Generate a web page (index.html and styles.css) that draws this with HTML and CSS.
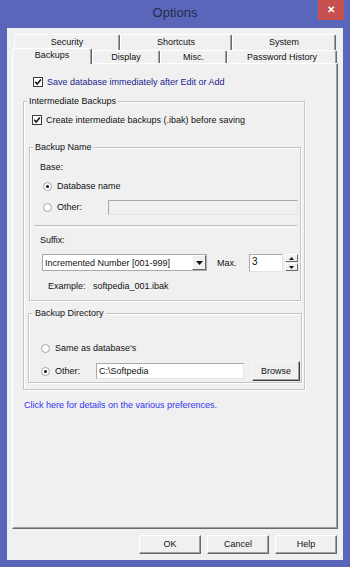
FILE: index.html
```html
<!DOCTYPE html>
<html lang="en">
<head>
    <meta charset="UTF-8">
    <meta name="viewport" content="width=device-width, initial-scale=1.0">
    <link rel="stylesheet" href="styles.css">
</head>
<body>
<div class="window">
    <div class="titlebar">
        <span class="title">Options</span>
        <span class="close">&#x2715;</span>
    </div>

    <div class="client">
        <div class="tab-row back">
            <div class="tab w-security">Security</div>
            <div class="tab w-shortcuts">Shortcuts</div>
            <div class="tab w-system">System</div>
        </div>
        <div class="tab-row front">
            <div class="tab active w-backups">Backups</div>
            <div class="tab w-display">Display</div>
            <div class="tab w-misc">Misc.</div>
            <div class="tab w-history">Password History</div>
        </div>

        <div class="panel">
            <div class="check-row save-row">
                <svg class="checkbox" viewBox="0 0 10 10"><rect x=".5" y=".5" width="9" height="9" fill="#fff" stroke="#3c3c3c"/><path d="M2.2 4.8 L4.2 7 L7.9 2.6" fill="none" stroke="#111" stroke-width="1.5"/></svg>
                <span class="save-label">Save database immediately after Edit or Add</span>
            </div>

            <div class="group group-intermediate">
                <div class="legend">Intermediate Backups</div>
                <div class="check-row ibak-row">
                    <svg class="checkbox" viewBox="0 0 10 10"><rect x=".5" y=".5" width="9" height="9" fill="#fff" stroke="#3c3c3c"/><path d="M2.2 4.8 L4.2 7 L7.9 2.6" fill="none" stroke="#111" stroke-width="1.5"/></svg>
                    <span>Create intermediate backups (.ibak) before saving</span>
                </div>

                <div class="group group-name">
                    <div class="legend">Backup Name</div>
                    <div class="field-label">Base:</div>
                    <div class="radio-row base-db">
                        <svg class="radio" viewBox="0 0 10 10"><circle cx="5" cy="5" r="4.4" fill="#fff" stroke="#9a9a9a"/><circle cx="5" cy="5" r="1.7" fill="#111"/></svg>
                        <span>Database name</span>
                    </div>
                    <div class="radio-row base-other">
                        <svg class="radio" viewBox="0 0 10 10"><circle cx="5" cy="5" r="4.4" fill="#fff" stroke="#9a9a9a"/></svg>
                        <span class="other-label">Other:</span>
                        <div class="textbox disabled base-input"></div>
                    </div>
                    <div class="separator"></div>
                    <div class="field-label suffix-label">Suffix:</div>
                    <div class="suffix-row">
                        <div class="combo">
                            <span class="combo-text">Incremented Number [001-999]</span>
                            <span class="combo-btn"><svg viewBox="0 0 7 4"><path d="M0 0 H7 L3.5 4 Z" fill="#111"/></svg></span>
                        </div>
                        <span class="max-label">Max.</span>
                        <div class="textbox spin-input">3</div>
                        <div class="spin">
                            <span class="spin-btn"><svg viewBox="0 0 5 3"><path d="M0 3 H5 L2.5 0 Z" fill="#111"/></svg></span>
                            <span class="spin-btn"><svg viewBox="0 0 5 3"><path d="M0 0 H5 L2.5 3 Z" fill="#111"/></svg></span>
                        </div>
                    </div>
                    <div class="example-row">
                        <span class="example-label">Example:</span>
                        <span>softpedia_001.ibak</span>
                    </div>
                </div>

                <div class="group group-dir">
                    <div class="legend">Backup Directory</div>
                    <div class="radio-row dir-same">
                        <svg class="radio" viewBox="0 0 10 10"><circle cx="5" cy="5" r="4.4" fill="#fff" stroke="#9a9a9a"/></svg>
                        <span>Same as database's</span>
                    </div>
                    <div class="radio-row dir-other">
                        <svg class="radio" viewBox="0 0 10 10"><circle cx="5" cy="5" r="4.4" fill="#fff" stroke="#9a9a9a"/><circle cx="5" cy="5" r="1.7" fill="#111"/></svg>
                        <span class="dir-label">Other:</span>
                        <div class="textbox dir-input">C:\Softpedia</div>
                        <div class="button browse">Browse</div>
                    </div>
                </div>
            </div>

            <div class="help-link">Click here for details on the various preferences.</div>
        </div>

        <div class="buttons">
            <div class="button">OK</div>
            <div class="button">Cancel</div>
            <div class="button">Help</div>
        </div>
    </div>
</div>
</body>
</html>
```

FILE: styles.css
```css
body {
    margin: 0;
    padding: 0;
    font-family: "Liberation Sans", Arial, sans-serif;
    font-size: 9px;
    color: #111;
}

.window {
    width: 350px;
    height: 567px;
    box-sizing: border-box;
    background-color: #5a66b9;
    padding: 0 7px 7px 7px;
    display: flex;
    flex-direction: column;
}

.titlebar {
    height: 28px;
    position: relative;
    display: flex;
    justify-content: center;
}

.title {
    font-size: 13px;
    line-height: 26px;
    color: #252a4a;
}

/* close button sits over the frame corner */
.close {
    position: absolute;
    top: 0;
    right: -1px;
    width: 26px;
    height: 20px;
    background-color: #c75050;
    color: #fff;
    font-size: 10px;
    font-weight: bold;
    text-align: center;
    line-height: 20px;
}

.client {
    flex: 1;
    background-color: #f0f0f0;
    padding: 6px 5px 6px 5px;
    display: flex;
    flex-direction: column;
}

/* Tabs */
.tab-row {
    display: flex;
    align-items: flex-start;
}

.tab-row.back {
    height: 16px;
    margin-left: 2px;
}

.tab-row.front {
    height: 13px;
}

.tab {
    box-sizing: border-box;
    height: 100%;
    background-color: #f0f0f0;
    border-top: 1px solid #fff;
    border-left: 1px solid #fff;
    border-right: 1px solid #696969;
    border-radius: 2px 2px 0 0;
    box-shadow: inset -1px 0 0 #a0a0a0;
    text-align: center;
    line-height: 15px;
}

.tab-row.back .tab {
    height: 16px;
}

.tab-row.front .tab {
    height: 13px;
    line-height: 13px;
}

.tab-row.front .tab.active {
    position: relative;
    z-index: 1;
    height: 16px;
    margin-top: -2px;
    margin-bottom: -1px;
    line-height: 13px;
    padding-bottom: 2px;
}

.w-security { width: 106px; }
.w-shortcuts { width: 112px; }
.w-system { width: 104px; }
.w-backups { width: 80px; }
.w-display { width: 68px; }
.w-misc { width: 67px; }
.w-history { width: 110px; }

.panel {
    flex: 1;
    box-sizing: border-box;
    border-top: 1px solid #fff;
    border-left: 1px solid #fff;
    border-right: 1px solid #696969;
    border-bottom: 1px solid #696969;
    box-shadow: inset -1px -1px 0 #a0a0a0;
}

/* Check boxes and radios */
.check-row,
.radio-row {
    display: flex;
    align-items: center;
    line-height: 11px;
}

.checkbox {
    width: 10px;
    height: 10px;
    margin-right: 4px;
    flex-shrink: 0;
}

.radio {
    width: 9px;
    height: 9px;
    margin-right: 5px;
    flex-shrink: 0;
}

.save-row {
    margin: 13px 0 0 20px;
    height: 10px;
}

.save-label {
    color: #23238f;
}

/* Group boxes */
.group {
    box-sizing: border-box;
    border: 1px solid #c4c4c4;
    box-shadow: inset 1px 1px 0 #fff, 1px 1px 0 #fff;
}

.legend {
    width: max-content;
    margin: -6px 0 0 3px;
    padding: 0 2px;
    background-color: #f0f0f0;
    line-height: 11px;
}

.group-intermediate {
    width: 282px;
    margin: 14px 0 0 10px;
    padding-bottom: 6px;
}

.ibak-row {
    height: 10px;
    margin: 8px 0 0 8px;
}

.group-name {
    width: 272px;
    margin: 22px 0 0 5px;
    padding-bottom: 8px;
}

.group-name .legend {
    margin-left: 3px;
}

.field-label {
    margin: 9px 0 0 10px;
    line-height: 11px;
}

.base-db {
    margin: 8px 0 0 13px;
}

.base-other {
    height: 15px;
    margin: 8px 0 0 13px;
}

.other-label {
    width: 51px;
}

.textbox {
    box-sizing: border-box;
    background-color: #fff;
    border: 1px solid #a9a9a9;
    border-right-color: #e3e3e3;
    border-bottom-color: #e3e3e3;
}

.textbox.disabled {
    background-color: #f0f0f0;
}

.base-input {
    width: 190px;
    height: 15px;
}

.separator {
    height: 1px;
    margin: 10px 3px 0 5px;
    border-top: 1px solid #bdbdbd;
    border-bottom: 1px solid #fff;
}

.suffix-label {
    margin-top: 7px;
}

.suffix-row {
    display: flex;
    align-items: center;
    height: 17px;
    margin: 8px 0 0 12px;
}

.combo {
    box-sizing: border-box;
    width: 165px;
    height: 17px;
    background-color: #fff;
    border: 1px solid #a9a9a9;
    display: flex;
    align-items: center;
    justify-content: space-between;
    padding-left: 2px;
}

.combo-btn {
    box-sizing: border-box;
    width: 14px;
    height: 15px;
    background-color: #f0f0f0;
    border: 1px solid;
    border-color: #fff #696969 #696969 #fff;
    display: flex;
    align-items: center;
    justify-content: center;
}

.combo-btn svg {
    width: 7px;
    height: 4px;
}

.max-label {
    width: 32px;
    margin-left: 10px;
}

.spin-input {
    width: 34px;
    height: 18px;
    padding: 1px 0 0 2px;
    font-size: 10px;
    line-height: 12px;
}

.spin {
    display: flex;
    flex-direction: column;
    gap: 1px;
    margin-left: 2px;
}

.spin-btn {
    box-sizing: border-box;
    width: 13px;
    height: 8px;
    background-color: #f0f0f0;
    border: 1px solid;
    border-color: #fff #696969 #696969 #fff;
    display: flex;
    align-items: center;
    justify-content: center;
}

.spin-btn svg {
    width: 5px;
    height: 3px;
}

.example-row {
    display: flex;
    margin: 10px 0 0 18px;
    line-height: 11px;
}

.example-label {
    width: 45px;
}

.group-dir {
    width: 274px;
    margin: 12px 0 0 4px;
    padding-bottom: 1px;
}

.group-dir .legend {
    margin-left: 4px;
}

.dir-same {
    margin: 24px 0 0 12px;
}

.dir-other {
    height: 20px;
    margin: 7px 0 0 12px;
}

.dir-label {
    width: 41px;
}

.dir-input {
    width: 148px;
    height: 16px;
    padding-left: 2px;
    line-height: 14px;
}

/* Push buttons */
.button {
    box-sizing: border-box;
    width: 62px;
    height: 19px;
    background-color: #f0f0f0;
    border: 1px solid;
    border-color: #fff #696969 #696969 #fff;
    box-shadow: inset -1px -1px 0 #a0a0a0;
    text-align: center;
    line-height: 17px;
}

.browse {
    width: 48px;
    height: 20px;
    margin-left: 8px;
    border-color: #f8f8f8 #3c3c3c #3c3c3c #f8f8f8;
    line-height: 18px;
}

.help-link {
    margin: 10px 0 0 11px;
    color: #3434ee;
    line-height: 11px;
}

.buttons {
    display: flex;
    justify-content: flex-end;
    gap: 6px;
    margin-top: 6px;
    padding-right: 1px;
}
```
